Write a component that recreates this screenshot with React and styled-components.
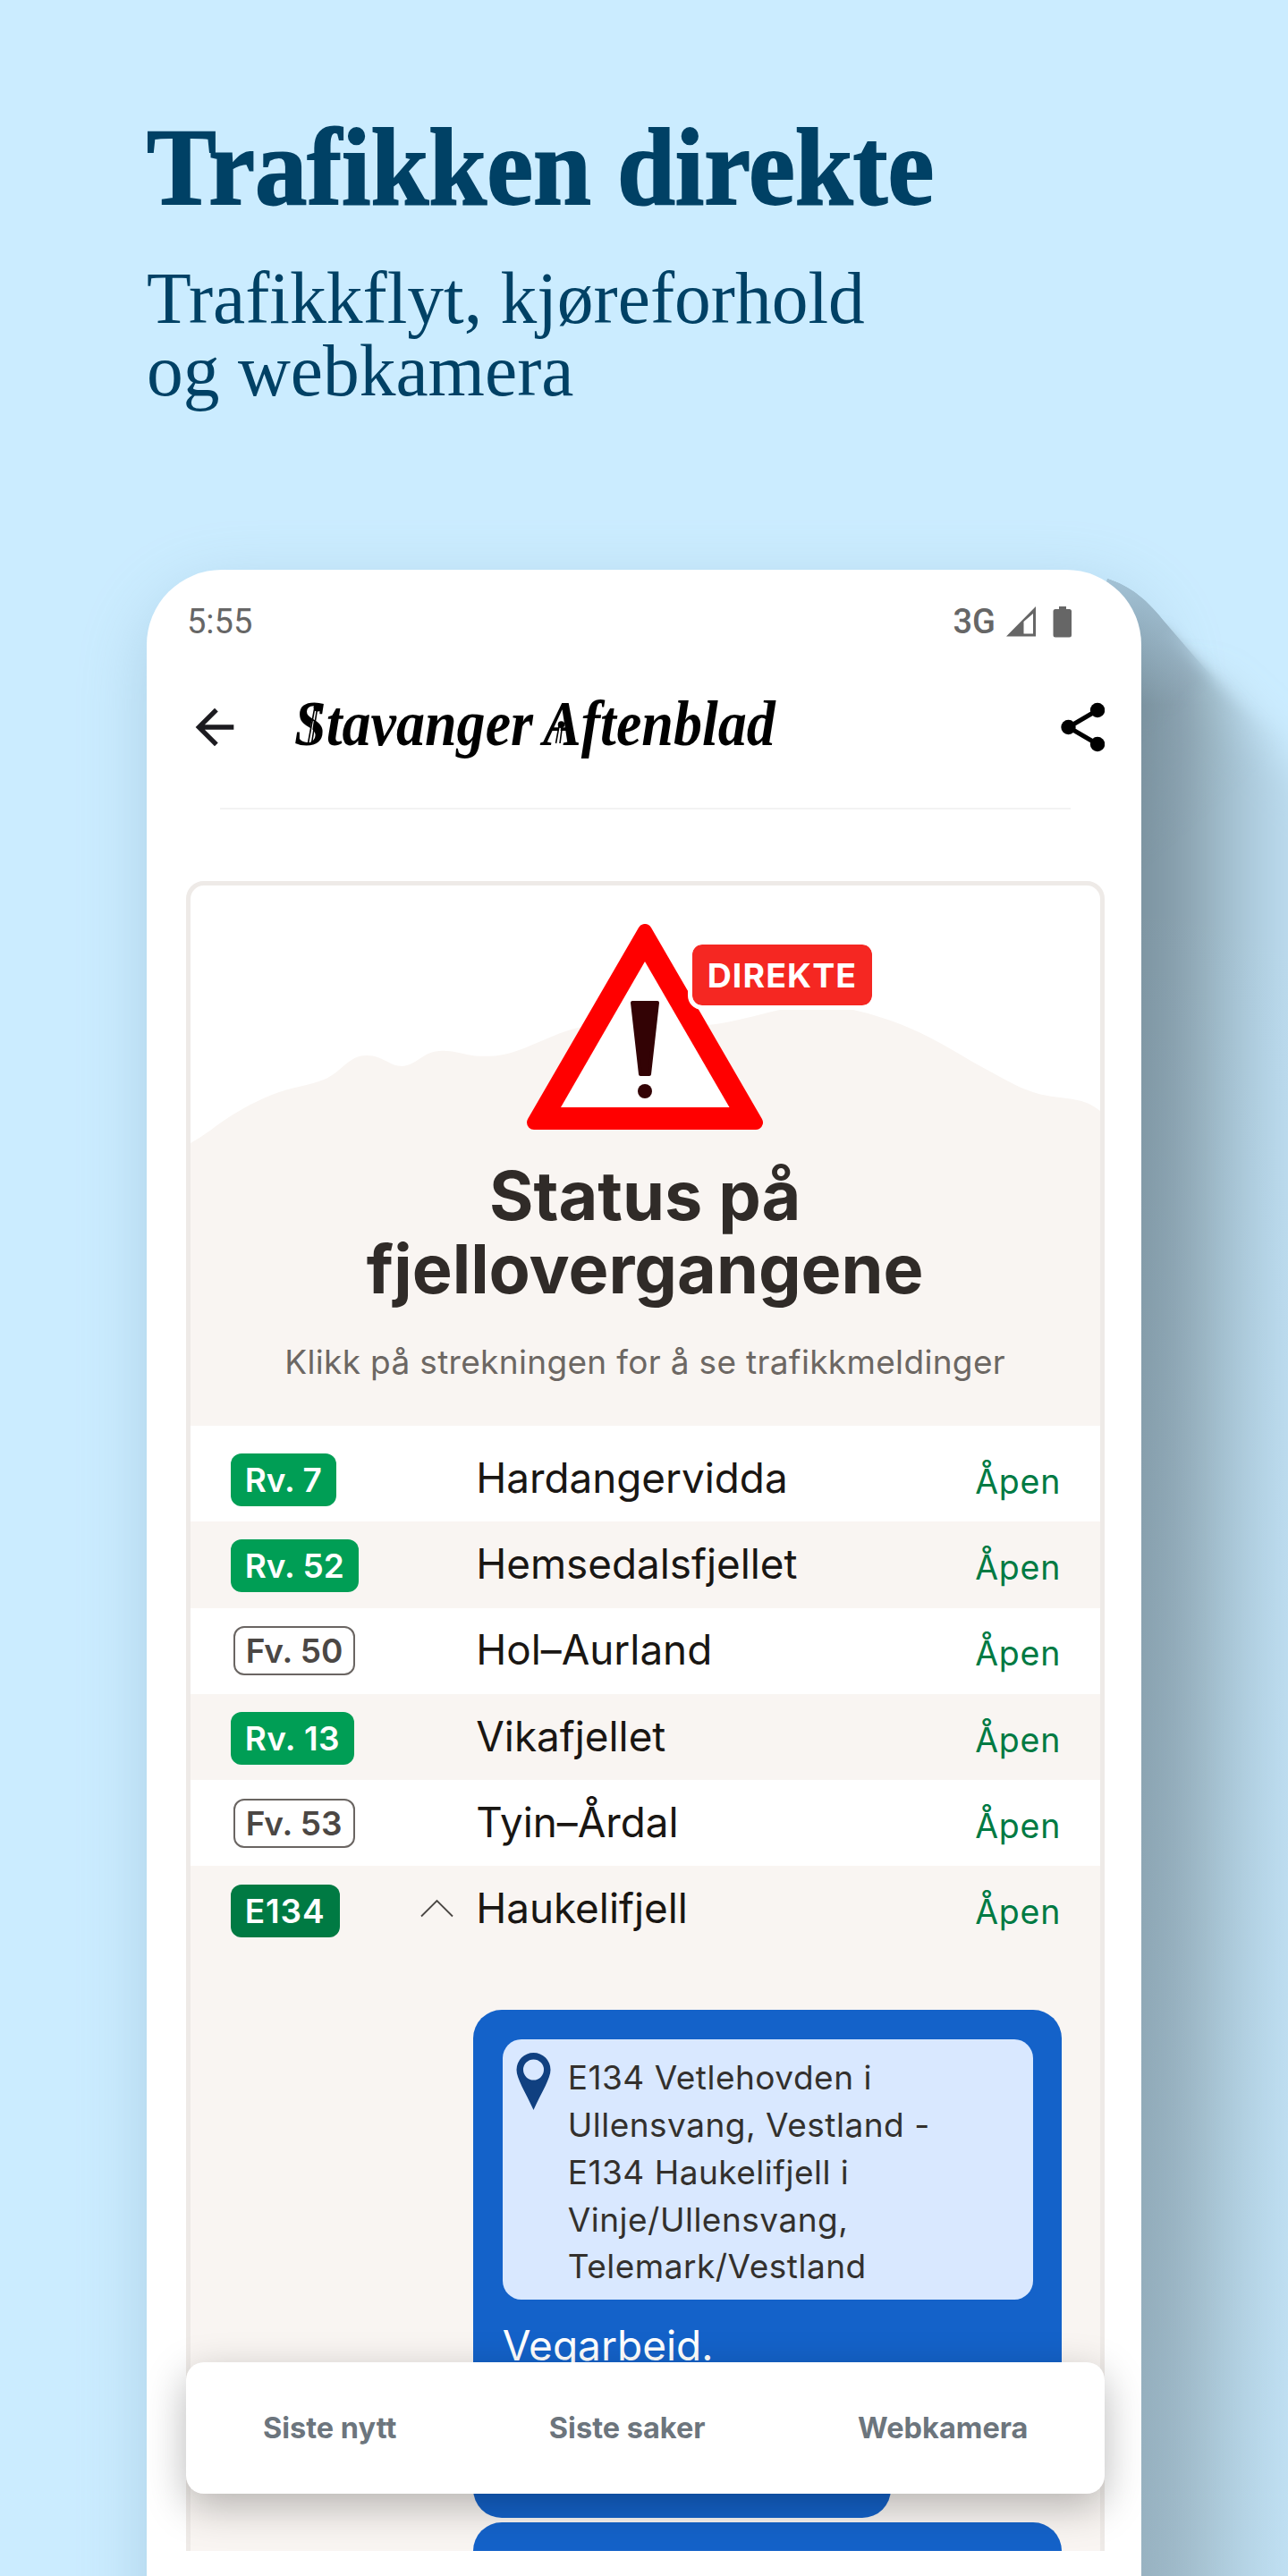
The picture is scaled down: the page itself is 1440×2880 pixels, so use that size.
import React from "react";
import styled, { createGlobalStyle } from "styled-components";

const GlobalStyle = createGlobalStyle`
  * {
    box-sizing: border-box;
  }
  body {
    margin: 0;
    background: #cbecff;
  }
`;

const Page = styled.main`
  position: relative;
  width: 1440px;
  height: 2880px;
  padding: 132px 164px 0;
  overflow: hidden;
  background: #cbecff;
  font-family: Inter, "Liberation Sans", sans-serif;
`;
const Intro = styled.header`
  height: 505px;
  color: #004165;
  font-family: "Liberation Serif", serif;
`;
const Headline = styled.h1`
  margin: 0;
  font-size: 122px;
  line-height: 109px;
  font-weight: bold;
  white-space: nowrap;
  transform: scaleX(0.956);
  transform-origin: left;
  -webkit-text-stroke: 1.8px #004165;
`;
const Tagline = styled.p`
  margin: 52px 0 0;
  font-size: 81.5px;
  line-height: 81px;
`;
const ShadowArt = styled.svg`
  position: absolute;
  top: 0;
  left: 0;
`;
const Phone = styled.section`
  position: relative;
  width: 1112px;
  height: 2300px;
  border-radius: 84px 84px 0 0;
  background: #fff;
`;
const Screen = styled.div`
  position: relative;
  height: 2214.5px;
  overflow: hidden;
  border-radius: 84px 84px 0 0;
`;

const StatusBar = styled.div`
  display: flex;
  align-items: center;
  justify-content: space-between;
  height: 115px;
  padding: 0 77px 0 45px;
  color: #666;
  font-family: Roboto, sans-serif;
  font-size: 38px;
`;
const StatusIcons = styled.div`
  display: flex;
  align-items: center;
  font-weight: 500;
`;
const AppBar = styled.div`
  display: flex;
  align-items: center;
  height: 121px;
  padding: 0 41px 0 44px;
`;
const Masthead = styled.div`
  position: relative;
  flex: 1;
  height: 121px;
  margin-left: 57px;
`;
const MastheadText = styled.div`
  font-family: "Liberation Serif", serif;
  font-size: 72px;
  line-height: 115px;
  font-weight: bold;
  font-style: italic;
  word-spacing: -3px;
  white-space: nowrap;
  transform: scaleX(0.89);
  transform-origin: left;
`;
const MastheadOrnament = styled.svg`
  position: absolute;
  top: 0;
  left: 0;
`;
const Divider = styled.hr`
  height: 2px;
  margin: 30px 79px 80px 82px;
  border: 0;
  background: #f3f3f3;
`;

const Card = styled.article`
  width: 1027px;
  height: 2000px;
  margin-left: 43.7px;
  overflow: hidden;
  border: 5px solid #eeeae7;
  border-radius: 20px;
`;
const CardHeader = styled.div`
  position: relative;
  display: flex;
  flex-direction: column;
  align-items: center;
  height: 604px;
  padding-top: 43px;
  text-align: center;
`;
const Mountains = styled.svg`
  position: absolute;
  top: 0;
  left: 0;
`;
const WarningSign = styled.svg`
  position: relative;
  flex: none;
`;
const LiveBadge = styled.span`
  position: absolute;
  top: 61px;
  left: 556px;
  padding: 1px 17px 0;
  border: 5px solid #fff;
  border-radius: 16px;
  background: #f52722;
  background-clip: padding-box;
  color: #fff;
  font-size: 37.5px;
  line-height: 67px;
  font-weight: 700;
  letter-spacing: 1.1px;
`;
const Title = styled.h2`
  position: relative;
  width: 800px;
  margin: 33px 0 0;
  color: #302b28;
  font-size: 75.5px;
  line-height: 82.3px;
  font-weight: 700;
`;
const Hint = styled.p`
  position: relative;
  margin: 35.5px 0 0;
  color: #6c6763;
  font-size: 37px;
  line-height: 54px;
  letter-spacing: 0.33px;
`;

const RoadList = styled.ul`
  margin: 0;
  padding: 11px 0 0;
  list-style: none;
`;
const RoadRow = styled.li`
  display: grid;
  grid-template-columns: 212px 62.5px 1fr auto;
  align-items: center;
  height: 96.3px;
  padding: 0 43.5px 0 45px;
  background: ${(props) => (props.$shaded ? "#f9f5f2" : "#fff")};
`;
const RoadBadge = styled.span`
  justify-self: start;
  margin: ${(props) => (props.$kind === "county" ? "0 0 0 3px" : "3px 0 0")};
  padding: 0 ${(props) => (props.$kind === "county" ? "12px" : "16px")};
  border: ${(props) => (props.$kind === "county" ? "2px solid #6a6562" : "0")};
  border-radius: 12px;
  background: ${(props) =>
    ({ county: "#fff", national: "#009e55", europe: "#007a43" })[props.$kind]};
  color: ${(props) => (props.$kind === "county" ? "#4b4744" : "#fff")};
  font-size: 37px;
  line-height: ${(props) => (props.$kind === "county" ? "51px" : "59px")};
  font-weight: 600;
  letter-spacing: ${(props) => props.$tracking || 0}px;
`;
const RoadName = styled.span`
  grid-column: 3;
  margin-top: -1px;
  color: #191613;
  font-size: 45.8px;
  line-height: 60px;
`;
const RoadStatus = styled.span`
  padding-top: 7px;
  color: #007a43;
  font-size: 37.5px;
  line-height: 50px;
  letter-spacing: 0.8px;
`;

const Alerts = styled.div`
  display: flex;
  flex-direction: column;
  gap: 4.6px;
  height: 800px;
  padding: 64px 43px 0 316px;
  background: #f9f5f2;
`;
const Bubble = styled.div`
  flex: none;
  width: ${(props) => props.$width || 658}px;
  height: ${(props) => props.$height}px;
  padding: 33px 32px 0 33px;
  border-radius: 32px;
  background: #1462c9;
  color: #fff;
  font-size: 46px;
  line-height: 60px;
`;
const Place = styled.div`
  display: flex;
  gap: 19px;
  height: 291px;
  margin-bottom: 21.5px;
  padding: 15px 0 0 15px;
  border-radius: 21px;
  background: #d9e8ff;
  color: #33302d;
  font-size: 37px;
  line-height: 52.9px;
  letter-spacing: 0.5px;
`;
const PlaceText = styled.div`
  padding-top: 2px;
`;
const TabBar = styled.nav`
  position: absolute;
  bottom: 63.5px;
  left: 43.7px;
  display: flex;
  align-items: center;
  justify-content: space-around;
  width: 1027px;
  height: 147px;
  padding: 0 0 1px 1px;
  border-radius: 20px;
  background: #fff;
  box-shadow: 0 14px 46px rgba(0, 0, 0, 0.28);
  color: #6c757d;
  font-size: 32.5px;
  font-weight: 700;
`;

const roads = [
  { number: "Rv. 7", kind: "national", name: "Hardangervidda" },
  { number: "Rv. 52", kind: "national", name: "Hemsedalsfjellet" },
  { number: "Fv. 50", kind: "county", name: "Hol–Aurland" },
  { number: "Rv. 13", kind: "national", name: "Vikafjellet", tracking: 0.4 },
  { number: "Fv. 53", kind: "county", name: "Tyin–Årdal" },
  { number: "E134", kind: "europe", name: "Haukelifjell", tracking: 0.9, open: true },
];

const shadowPath =
  "M1232 690 L1238 647 C1262 655 1280 668 1300 693 L1336 735 L1380 785 L1560 960 V3000 H1232Z";

const PhoneShadow = () => (
  <ShadowArt width="1440" height="2880" viewBox="0 0 1440 2880">
    <defs>
      <linearGradient id="cast" gradientUnits="userSpaceOnUse" x1="1276" y1="0" x2="1456" y2="0">
        <stop offset="0" stopColor="#7b93a0" />
        <stop offset=".28" stopColor="#8ba2b0" />
        <stop offset=".44" stopColor="#9ab5c2" />
        <stop offset=".65" stopColor="#abc9db" />
        <stop offset="1" stopColor="#c0e0f3" />
      </linearGradient>
      <linearGradient id="lift" x1="0" y1="0" x2="0" y2="1">
        <stop offset="0" stopColor="#b4d6ec" stopOpacity=".7" />
        <stop offset=".06" stopColor="#b4d6ec" stopOpacity="0" />
        <stop offset=".15" stopColor="#cbecff" stopOpacity="0" />
        <stop offset="1" stopColor="#cbecff" stopOpacity=".36" />
      </linearGradient>
      <linearGradient id="near" gradientUnits="userSpaceOnUse" x1="1308" y1="700" x2="1360" y2="762">
        <stop offset="0" stopColor="#fff" />
        <stop offset="1" stopColor="#000" />
      </linearGradient>
      <linearGradient id="mid" gradientUnits="userSpaceOnUse" x1="1350" y1="750" x2="1430" y2="840">
        <stop offset="0" stopColor="#fff" />
        <stop offset="1" stopColor="#000" />
      </linearGradient>
      <mask id="nearMask" maskUnits="userSpaceOnUse" x="0" y="0" width="1440" height="2880">
        <rect width="1440" height="2880" fill="url(#near)" />
      </mask>
      <mask id="midMask" maskUnits="userSpaceOnUse" x="0" y="0" width="1440" height="2880">
        <rect width="1440" height="2880" fill="url(#mid)" />
      </mask>
      <filter id="soft" filterUnits="userSpaceOnUse" x="0" y="400" width="1700" height="2700">
        <feGaussianBlur stdDeviation="38" />
      </filter>
      <filter id="blurMid" filterUnits="userSpaceOnUse" x="1000" y="400" width="700" height="2700">
        <feGaussianBlur stdDeviation="8" />
      </filter>
      <filter id="blurFar" filterUnits="userSpaceOnUse" x="1000" y="400" width="700" height="2700">
        <feGaussianBlur stdDeviation="24" />
      </filter>
      <clipPath id="castArea">
        <path d="M1200 600H1440V2880H1200Z" />
      </clipPath>
    </defs>
    <rect x="164" y="660" width="1130" height="2400" rx="90" fill="#7fa8c2" opacity=".42" filter="url(#soft)" />
    <g clipPath="url(#castArea)">
      <path d="M1200 770H1350L1560 965V3000H1200Z" fill="url(#cast)" filter="url(#blurFar)" />
      <g mask="url(#midMask)">
        <path
          d="M1200 720 L1300 705 L1336 739 L1380 787 L1560 960 V3000 H1200Z"
          fill="url(#cast)"
          filter="url(#blurMid)"
        />
      </g>
      <g mask="url(#nearMask)">
        <path d={shadowPath} fill="url(#cast)" />
      </g>
      <path d={shadowPath} fill="url(#lift)" />
    </g>
  </ShadowArt>
);

const BackIcon = () => (
  <svg width="64" height="64" viewBox="0 0 24 24" fill="#1c1b20">
    <path d="M20 11H7.83l5.59-5.59L12 4l-8 8 8 8 1.41-1.41L7.83 13H20v-2z" />
  </svg>
);

const ShareIcon = () => (
  <svg width="49" height="56" viewBox="0 0 49 56">
    <path d="M41 9 8.500 28 41 47" fill="none" stroke="#000" strokeWidth="5" />
    <circle cx="41" cy="9" r="8.200" />
    <circle cx="8.500" cy="28" r="8.200" />
    <circle cx="41" cy="47" r="8.200" />
  </svg>
);

const SignalBattery = () => (
  <svg width="86" height="36" viewBox="0 0 86 36" fill="#666">
    <path fillRule="evenodd" d="M12 34.500 45 1V34.500ZM31.500 18V31.500H42V9Z" />
    <path d="M71 1H79V4H82.500Q85 4 85 6.500V33Q85 35.500 82.500 35.500H67Q64.500 35.500 64.500 33V6.500Q64.500 4 67 4H71Z" />
  </svg>
);

const App = () => {
  return (
    <>
      <GlobalStyle />
      <Page>
        <PhoneShadow />
        <Intro>
          <Headline>Trafikken direkte</Headline>
          <Tagline>
            Trafikkflyt, kjøreforhold
            <br />
            og webkamera
          </Tagline>
        </Intro>
        <Phone>
          <Screen>
            <StatusBar>
              <span>5:55</span>
              <StatusIcons>
                3G
                <SignalBattery />
              </StatusIcons>
            </StatusBar>
            <AppBar>
              <BackIcon />
              <Masthead>
                <MastheadText>Stavanger Aftenblad</MastheadText>
                <MastheadOrnament width="320" height="121" viewBox="329 752 320 121">
                  <path d="M349.500 806 346 830" stroke="#fff" strokeWidth="2.500" />
                  <path d="M351.500 793 344.500 831M354.500 793 348.500 831" stroke="#000" strokeWidth="1.600" />
                  <circle cx="355" cy="791" r="4.500" />
                  <path d="M626 814 623.500 831" stroke="#fff" strokeWidth="2" />
                  <path d="M625 812 621.500 831M628.500 812 626 831" stroke="#000" strokeWidth="1.600" />
                  <circle cx="627.500" cy="810" r="3.800" />
                </MastheadOrnament>
              </Masthead>
              <ShareIcon />
            </AppBar>
            <Divider />
            <Card>
              <CardHeader>
                <Mountains width="1017" height="604" viewBox="213 990 1017 604">
                  <path
                    fill="#f9f5f2"
                    d="M213 1278C226 1271 236 1263 247 1255C266 1242 286 1231 304 1224C326 1215 346 1214 362 1207C382 1199 389 1180 410 1180C428 1180 435 1192 450 1192C468 1190 473 1174 496 1174.700C514 1175 524 1182 545 1180.700C580 1182 615 1154 652 1148C700 1140 750 1152 794 1145.700C820 1143 845 1135 872 1129C900 1124 928 1123 954 1129C976 1134 998 1141 1016 1149C1050 1163 1078 1183 1109 1199C1131 1211 1150 1222 1171 1225C1193 1229 1212 1227 1230 1242V1594H213Z"
                  />
                </Mountains>
                <WarningSign width="264" height="230" viewBox="0 0 264 230">
                  <path
                    d="M132 8 256 222H8Z"
                    fill="#f00"
                    stroke="#f00"
                    strokeWidth="16"
                    strokeLinejoin="round"
                  />
                  <path d="M132 42 226.500 205H38Z" fill="#fff" />
                  <path
                    d="M118 88 146 88 137 168H127Z"
                    fill="#330305"
                    stroke="#330305"
                    strokeWidth="4"
                    strokeLinejoin="round"
                  />
                  <circle cx="132" cy="187" r="8" fill="#330305" />
                </WarningSign>
                <LiveBadge>DIREKTE</LiveBadge>
                <Title>
                  Status på
                  <br />
                  fjellovergangene
                </Title>
                <Hint>Klikk på strekningen for å se trafikkmeldinger</Hint>
              </CardHeader>
              <RoadList>
                {roads.map((road, i) => (
                  <RoadRow key={road.number} $shaded={i % 2 === 1}>
                    <RoadBadge $kind={road.kind} $tracking={road.tracking}>
                      {road.number}
                    </RoadBadge>
                    {road.open && (
                      <svg width="37" height="26" viewBox="0 0 37 26">
                        <path d="M1 20.500 18.500 3 36 20.500" fill="none" stroke="#4b4744" strokeWidth="1.800" />
                      </svg>
                    )}
                    <RoadName>{road.name}</RoadName>
                    <RoadStatus>Åpen</RoadStatus>
                  </RoadRow>
                ))}
              </RoadList>
              <Alerts>
                <Bubble $height={444.3}>
                  <Place>
                    <svg width="39" height="64" viewBox="0 0 39 64">
                      <path
                        fill="#104080"
                        fillRule="evenodd"
                        d="M19.500 0A19 19 0 0 1 38.500 19C38.500 29 29 43 19.500 64C10 43 .5 29 .5 19A19 19 0 0 1 19.500 0ZM19.500 7.500A11.500 11.500 0 1 0 19.500 30.500A11.500 11.500 0 1 0 19.500 7.500Z"
                      />
                    </svg>
                    <PlaceText>
                      E134 Vetlehovden i<br />
                      Ullensvang, Vestland -<br />
                      E134 Haukelifjell i<br />
                      Vinje/Ullensvang,
                      <br />
                      Telemark/Vestland
                    </PlaceText>
                  </Place>
                  Vegarbeid.
                </Bubble>
                <Bubble $height={119.5} $width={467} />
                <Bubble $height={200} />
              </Alerts>
            </Card>
            <TabBar>
              <span>Siste nytt</span>
              <span>Siste saker</span>
              <span>Webkamera</span>
            </TabBar>
          </Screen>
        </Phone>
      </Page>
    </>
  );
};

export default App;
